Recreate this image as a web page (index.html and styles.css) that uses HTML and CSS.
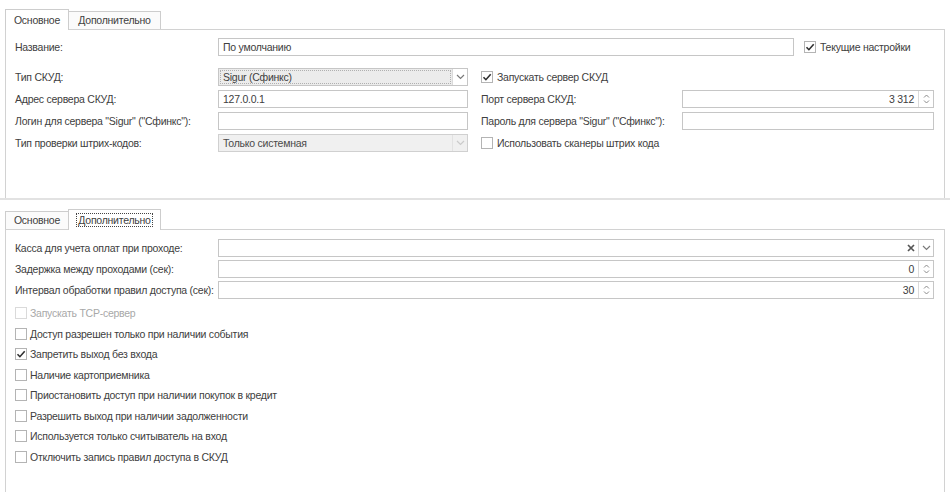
FILE: index.html
```html
<!DOCTYPE html>
<html lang="ru">
<head>
    <meta charset="UTF-8">
    <title>Настройки СКУД</title>
    <link rel="stylesheet" href="styles.css">
</head>
<body>
    <div class="tabs tabs-top">
        <div class="tab-strip">
            <div class="tab tab-main active">Основное</div>
            <div class="tab tab-extra">Дополнительно</div>
        </div>
        <div class="page page-main">
            <div class="name-row">
                <span class="lbl">Название:</span>
                <div class="field name-field">По умолчанию</div>
                <div class="check name-check">
                    <span class="box"><svg width="10" height="10" viewBox="0 0 10 10"><path d="M1.5 5.3l2.4 2.4L8.7 2.2" stroke="#2f2f2f" stroke-width="1.6" fill="none"/></svg></span>
                    Текущие настройки
                </div>
            </div>

            <div class="grid">
                <span class="lbl">Тип СКУД:</span>
                <div class="field select focused">
                    <span class="val">Sigur (Сфинкс)</span>
                    <span class="btn"><svg width="9" height="6" viewBox="0 0 9 6"><path d="M1 1l3.5 3.5L8 1" stroke="#7a7a7a" stroke-width="1.2" fill="none"/></svg></span>
                </div>
                <div class="check col3">
                    <span class="box"><svg width="10" height="10" viewBox="0 0 10 10"><path d="M1.5 5.3l2.4 2.4L8.7 2.2" stroke="#2f2f2f" stroke-width="1.6" fill="none"/></svg></span>
                    Запускать сервер СКУД
                </div>
                <span></span>

                <span class="lbl">Адрес сервера СКУД:</span>
                <div class="field">127.0.0.1</div>
                <span class="lbl col3">Порт сервера СКУД:</span>
                <div class="field spin">
                    <span class="val">3 312</span>
                    <span class="btn spin-btn">
                        <svg width="7" height="4" viewBox="0 0 7 4"><path d="M1 3.5l2.5-2.5L6 3.5" stroke="#8a8a8a" stroke-width="1" fill="none"/></svg>
                        <svg width="7" height="4" viewBox="0 0 7 4"><path d="M1 0.5l2.5 2.5L6 0.5" stroke="#8a8a8a" stroke-width="1" fill="none"/></svg>
                    </span>
                </div>

                <span class="lbl">Логин для сервера "Sigur" ("Сфинкс"):</span>
                <div class="field"></div>
                <span class="lbl col3">Пароль для сервера "Sigur" ("Сфинкс"):</span>
                <div class="field"></div>

                <span class="lbl">Тип проверки штрих-кодов:</span>
                <div class="field select disabled">
                    <span class="val">Только системная</span>
                    <span class="btn"><svg width="9" height="6" viewBox="0 0 9 6"><path d="M1 1l3.5 3.5L8 1" stroke="#cbcbcb" stroke-width="1.2" fill="none"/></svg></span>
                </div>
                <div class="check col3">
                    <span class="box"></span>
                    Использовать сканеры штрих кода
                </div>
                <span></span>
            </div>
        </div>
    </div>

    <div class="sep"></div>

    <div class="tabs tabs-bottom">
        <div class="tab-strip">
            <div class="tab tab-main">Основное</div>
            <div class="tab tab-extra active"><span class="focus">Дополнительно</span></div>
        </div>
        <div class="page page-extra">
            <div class="form">
                <span class="lbl">Касса для учета оплат при проходе:</span>
                <div class="field select">
                    <span class="val"></span>
                    <span class="btn clear"><svg width="8" height="8" viewBox="0 0 8 8"><path d="M1 1l6 6M7 1L1 7" stroke="#555" stroke-width="1.7"/></svg></span>
                    <span class="btn"><svg width="9" height="6" viewBox="0 0 9 6"><path d="M1 1l3.5 3.5L8 1" stroke="#7a7a7a" stroke-width="1.2" fill="none"/></svg></span>
                </div>

                <span class="lbl">Задержка между проходами (сек):</span>
                <div class="field spin">
                    <span class="val">0</span>
                    <span class="btn spin-btn">
                        <svg width="7" height="4" viewBox="0 0 7 4"><path d="M1 3.5l2.5-2.5L6 3.5" stroke="#8a8a8a" stroke-width="1" fill="none"/></svg>
                        <svg width="7" height="4" viewBox="0 0 7 4"><path d="M1 0.5l2.5 2.5L6 0.5" stroke="#8a8a8a" stroke-width="1" fill="none"/></svg>
                    </span>
                </div>

                <span class="lbl">Интервал обработки правил доступа (сек):</span>
                <div class="field spin">
                    <span class="val">30</span>
                    <span class="btn spin-btn">
                        <svg width="7" height="4" viewBox="0 0 7 4"><path d="M1 3.5l2.5-2.5L6 3.5" stroke="#8a8a8a" stroke-width="1" fill="none"/></svg>
                        <svg width="7" height="4" viewBox="0 0 7 4"><path d="M1 0.5l2.5 2.5L6 0.5" stroke="#8a8a8a" stroke-width="1" fill="none"/></svg>
                    </span>
                </div>
            </div>

            <div class="check-list">
                <div class="check disabled"><span class="box"></span>Запускать TCP-сервер</div>
                <div class="check"><span class="box"></span>Доступ разрешен только при наличии события</div>
                <div class="check"><span class="box plain"><svg width="10" height="10" viewBox="0 0 10 10"><path d="M1.5 5.3l2.4 2.4L8.7 2.2" stroke="#2f2f2f" stroke-width="1.6" fill="none"/></svg></span>Запретить выход без входа</div>
                <div class="check"><span class="box"></span>Наличие картоприемника</div>
                <div class="check"><span class="box"></span>Приостановить доступ при наличии покупок в кредит</div>
                <div class="check"><span class="box"></span>Разрешить выход при наличии задолженности</div>
                <div class="check"><span class="box"></span>Используется только считыватель на вход</div>
                <div class="check"><span class="box"></span>Отключить запись правил доступа в СКУД</div>
            </div>
        </div>
    </div>
</body>
</html>
```

FILE: styles.css
```css
body {
    margin: 0;
    background: #fff;
    font-family: "Liberation Sans", Arial, sans-serif;
    font-size: 10.5px;
    letter-spacing: -0.25px;
    color: #404040;
}

.tabs {
    margin-left: 5px;
    width: 940px;
}
.tabs-top { padding-top: 9px; }
.tabs-bottom { padding-top: 9px; }

.tab-strip {
    display: flex;
    align-items: flex-end;
    height: 20px;
}
.tab {
    box-sizing: border-box;
    height: 18px;
    border: 1px solid #cdcdcd;
    border-bottom: none;
    background: #fbfbfb;
    text-align: center;
    line-height: 16px;
    white-space: nowrap;
}
.tab-main { width: 64px; }
.tab-extra { width: 93px; margin-left: -1px; }
.tab.active {
    height: 21px;
    margin-bottom: -1px;
    background: #fff;
    line-height: 20px;
    position: relative;
    z-index: 1;
}
.focus {
    outline: 1px dotted #444;
    padding: 0 1px;
}

.page {
    box-sizing: border-box;
    border: 1px solid #d2d2d2;
    background: #fff;
}
.page-main {
    height: 169px;
    border-bottom: none;
    padding: 8px 9px 0;
}
.page-extra {
    height: 263px;
    border-bottom: none;
    padding: 9px 9px 0;
}

.sep {
    height: 2px;
    background: #e2e2e2;
}

.lbl { white-space: nowrap; }

.name-row {
    display: flex;
    align-items: center;
    height: 18px;
}
.name-row .lbl { width: 203px; }
.name-field { width: 576px; }
.name-check { margin-left: 10px; }

.grid {
    display: grid;
    grid-template-columns: 203px 250px 214px 252px;
    grid-auto-rows: 18px;
    row-gap: 4px;
    align-items: center;
    margin-top: 12px;
}
.col3 { padding-left: 13px; }

.form {
    display: grid;
    grid-template-columns: 203px 716px;
    grid-auto-rows: 18px;
    row-gap: 3px;
    align-items: center;
}

.field {
    box-sizing: border-box;
    height: 18px;
    border: 1px solid #c6c6c6;
    background: #fff;
    padding: 0 4px;
    line-height: 16px;
    white-space: nowrap;
    overflow: hidden;
}
.field.select,
.field.spin {
    display: flex;
    padding: 0;
}
.field .val {
    flex: 1;
    padding: 0 4px;
}
.field.spin .val {
    text-align: right;
    padding-right: 4px;
}
.field.focused .val {
    background: #ececec;
    outline: 1px dotted #b0b0b0;
    outline-offset: -2px;
}
.field.disabled {
    border-color: #d0d0d0;
    background: #f0f0f0;
    color: #4a4a4a;
}

.btn {
    width: 14px;
    border-left: 1px solid #dadada;
    display: flex;
    align-items: center;
    justify-content: center;
}
.btn.clear { border-left: none; }
.field.disabled .btn { border-left-color: #e2e2e2; }
.spin-btn {
    flex-direction: column;
    gap: 2px;
}

.check {
    display: flex;
    align-items: center;
    gap: 4px;
    white-space: nowrap;
}
.box {
    box-sizing: border-box;
    width: 12px;
    height: 12px;
    border: 1px solid #b4b4b4;
    background: #fff;
    display: flex;
    align-items: center;
    justify-content: center;
    flex-shrink: 0;
}

.check-list {
    margin-top: 4px;
}
.check-list .check {
    height: 20.5px;
    gap: 3px;
}
.check.disabled { color: #a8a8a8; }
.check.disabled .box { border-color: #dadada; }
```
